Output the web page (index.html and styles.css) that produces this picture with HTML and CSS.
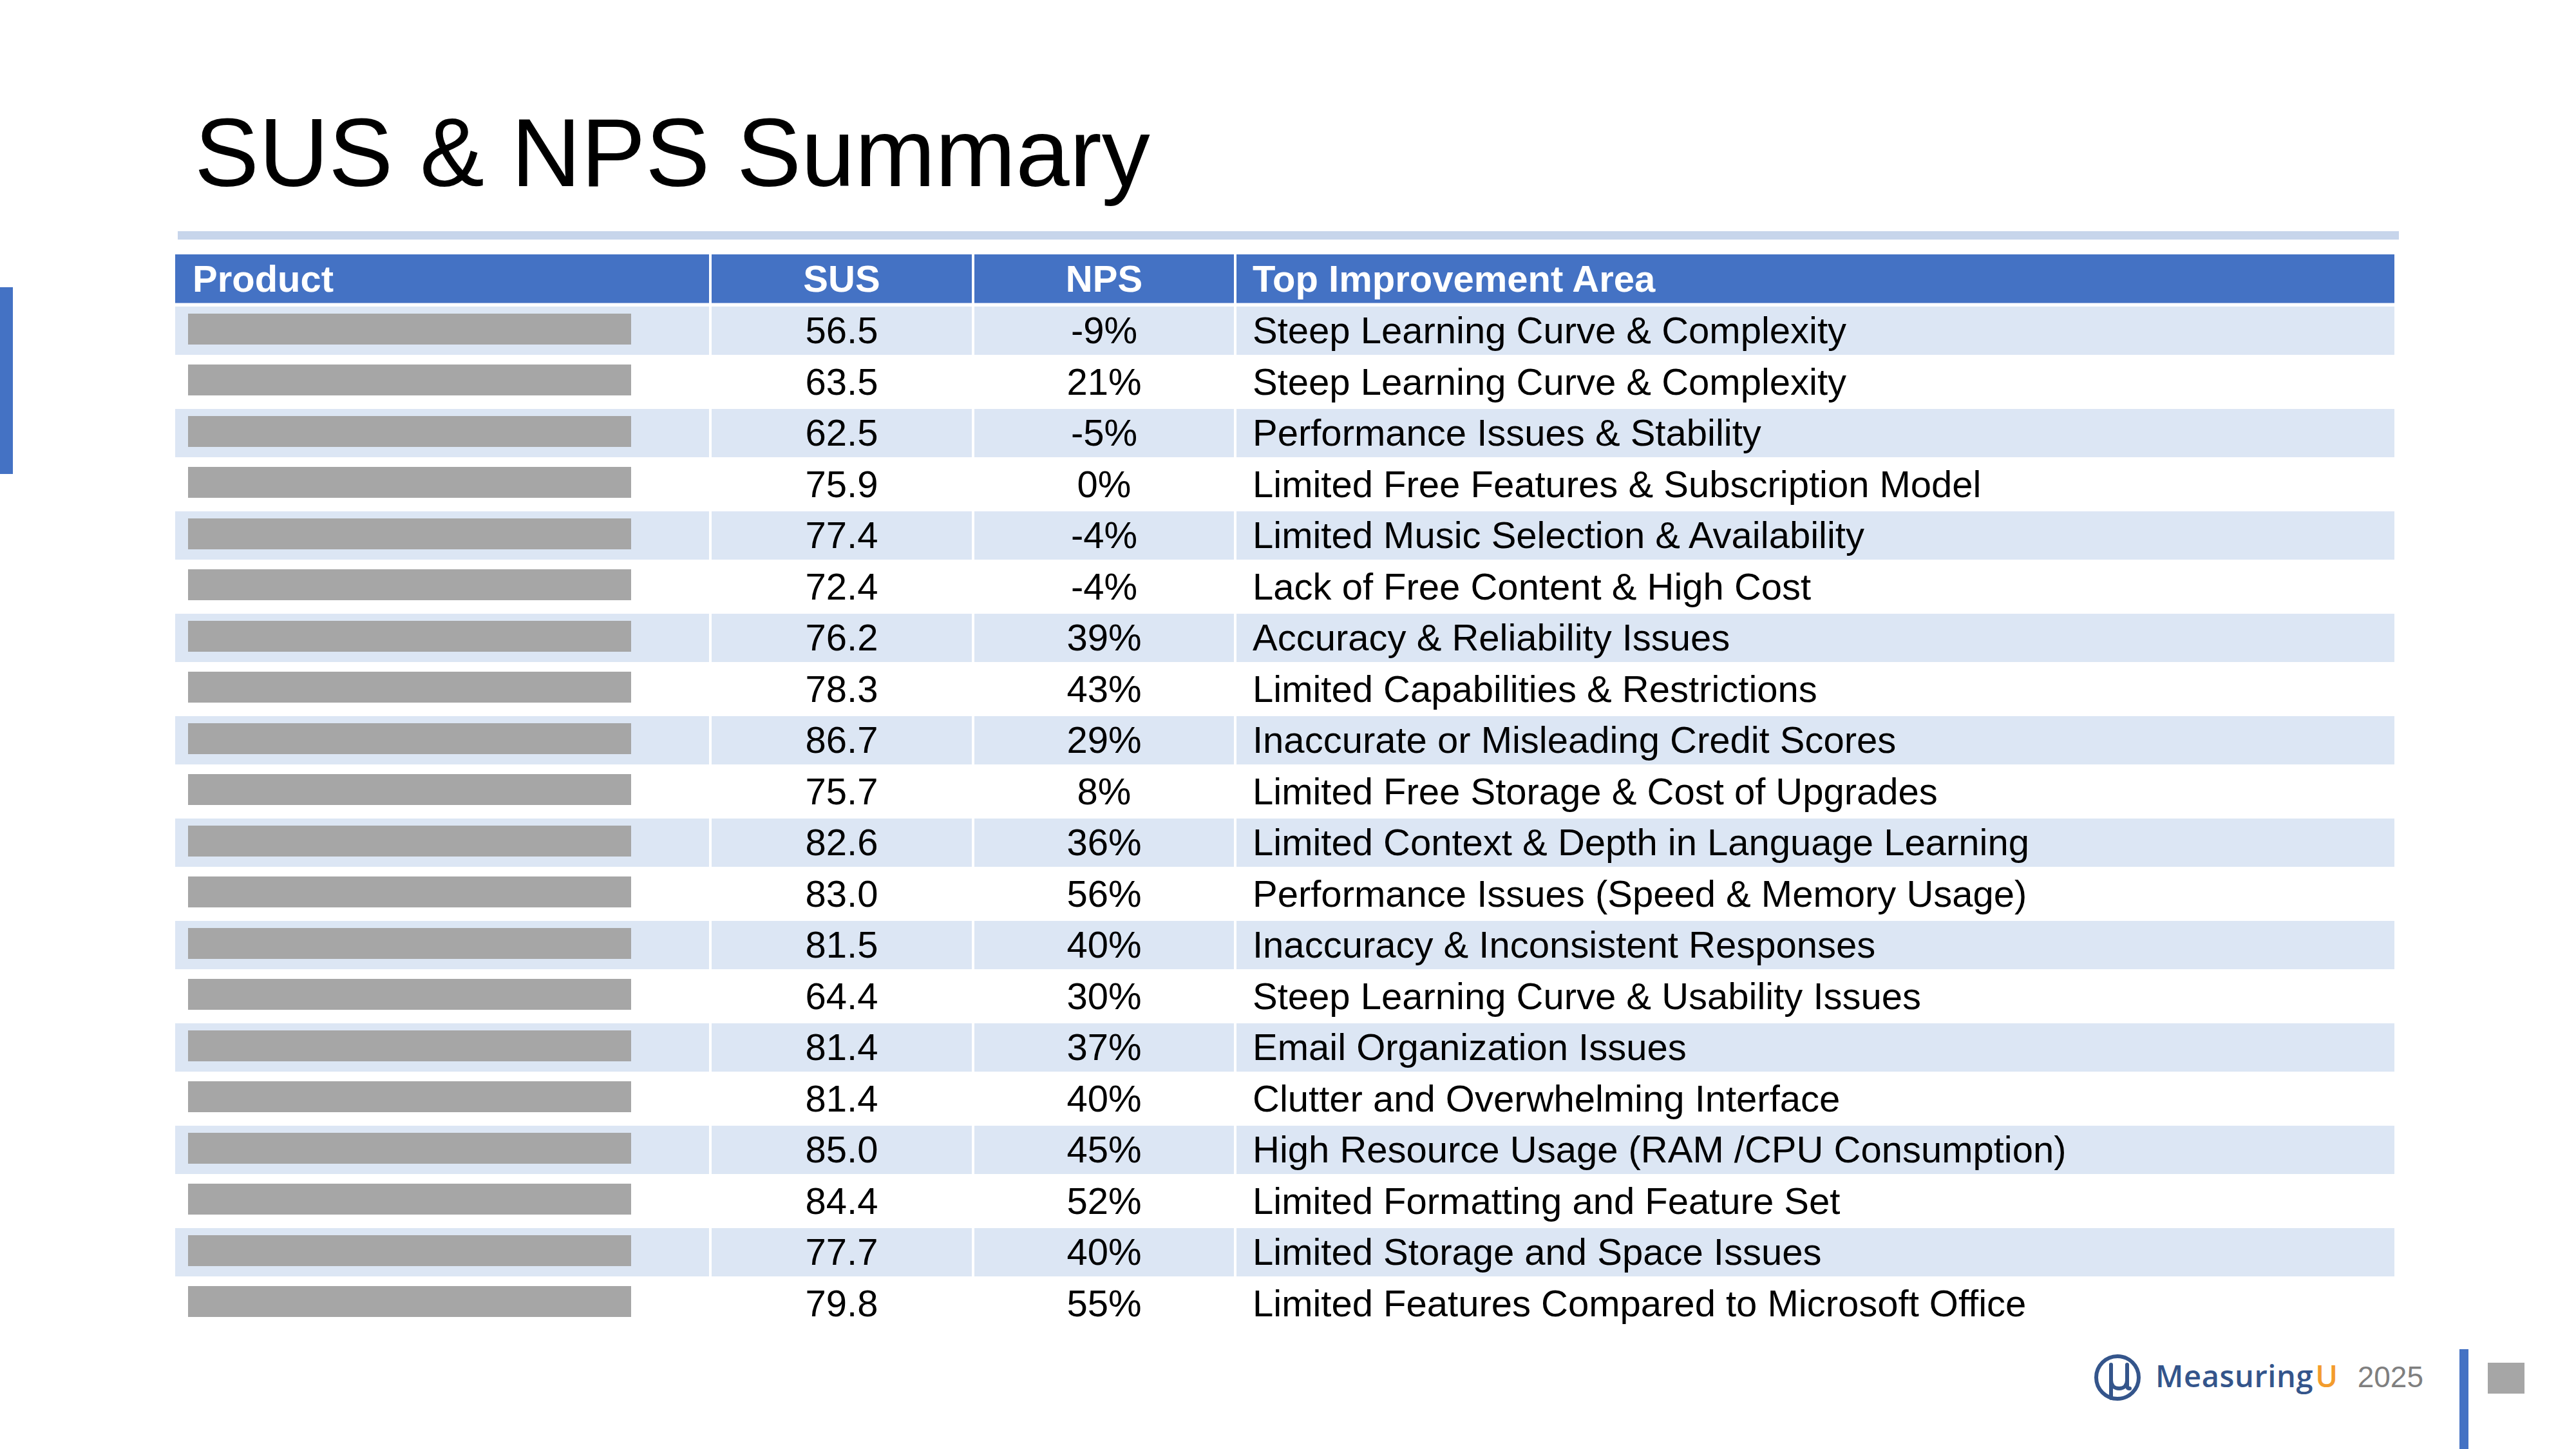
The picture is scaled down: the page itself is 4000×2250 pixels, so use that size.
FILE: index.html
```html
<!DOCTYPE html>
<html lang="en">
<head>
<meta charset="utf-8">
<title>SUS &amp; NPS Summary</title>
<link rel="stylesheet" href="styles.css">
</head>
<body>
<div class="slide">
  <h1 class="title">SUS &amp; NPS Summary</h1>
  <div class="rule"></div>
  <div class="content">
    <div class="accent"></div>
    <div class="table">
      <div class="row head">
        <div class="cell prod">Product</div>
        <div class="cell num">SUS</div>
        <div class="cell num">NPS</div>
        <div class="cell area">Top Improvement Area</div>
      </div>
      <div class="row shade"><div class="cell prod"><span class="redact"></span></div><div class="cell num">56.5</div><div class="cell num">-9%</div><div class="cell area">Steep Learning Curve &amp; Complexity</div></div>
      <div class="row"><div class="cell prod"><span class="redact"></span></div><div class="cell num">63.5</div><div class="cell num">21%</div><div class="cell area">Steep Learning Curve &amp; Complexity</div></div>
      <div class="row shade"><div class="cell prod"><span class="redact"></span></div><div class="cell num">62.5</div><div class="cell num">-5%</div><div class="cell area">Performance Issues &amp; Stability</div></div>
      <div class="row"><div class="cell prod"><span class="redact"></span></div><div class="cell num">75.9</div><div class="cell num">0%</div><div class="cell area">Limited Free Features &amp; Subscription Model</div></div>
      <div class="row shade"><div class="cell prod"><span class="redact"></span></div><div class="cell num">77.4</div><div class="cell num">-4%</div><div class="cell area">Limited Music Selection &amp; Availability</div></div>
      <div class="row"><div class="cell prod"><span class="redact"></span></div><div class="cell num">72.4</div><div class="cell num">-4%</div><div class="cell area">Lack of Free Content &amp; High Cost</div></div>
      <div class="row shade"><div class="cell prod"><span class="redact"></span></div><div class="cell num">76.2</div><div class="cell num">39%</div><div class="cell area">Accuracy &amp; Reliability Issues</div></div>
      <div class="row"><div class="cell prod"><span class="redact"></span></div><div class="cell num">78.3</div><div class="cell num">43%</div><div class="cell area">Limited Capabilities &amp; Restrictions</div></div>
      <div class="row shade"><div class="cell prod"><span class="redact"></span></div><div class="cell num">86.7</div><div class="cell num">29%</div><div class="cell area">Inaccurate or Misleading Credit Scores</div></div>
      <div class="row"><div class="cell prod"><span class="redact"></span></div><div class="cell num">75.7</div><div class="cell num">8%</div><div class="cell area">Limited Free Storage &amp; Cost of Upgrades</div></div>
      <div class="row shade"><div class="cell prod"><span class="redact"></span></div><div class="cell num">82.6</div><div class="cell num">36%</div><div class="cell area">Limited Context &amp; Depth in Language Learning</div></div>
      <div class="row"><div class="cell prod"><span class="redact"></span></div><div class="cell num">83.0</div><div class="cell num">56%</div><div class="cell area">Performance Issues (Speed &amp; Memory Usage)</div></div>
      <div class="row shade"><div class="cell prod"><span class="redact"></span></div><div class="cell num">81.5</div><div class="cell num">40%</div><div class="cell area">Inaccuracy &amp; Inconsistent Responses</div></div>
      <div class="row"><div class="cell prod"><span class="redact"></span></div><div class="cell num">64.4</div><div class="cell num">30%</div><div class="cell area">Steep Learning Curve &amp; Usability Issues</div></div>
      <div class="row shade"><div class="cell prod"><span class="redact"></span></div><div class="cell num">81.4</div><div class="cell num">37%</div><div class="cell area">Email Organization Issues</div></div>
      <div class="row"><div class="cell prod"><span class="redact"></span></div><div class="cell num">81.4</div><div class="cell num">40%</div><div class="cell area">Clutter and Overwhelming Interface</div></div>
      <div class="row shade"><div class="cell prod"><span class="redact"></span></div><div class="cell num">85.0</div><div class="cell num">45%</div><div class="cell area">High Resource Usage (RAM /CPU Consumption)</div></div>
      <div class="row"><div class="cell prod"><span class="redact"></span></div><div class="cell num">84.4</div><div class="cell num">52%</div><div class="cell area">Limited Formatting and Feature Set</div></div>
      <div class="row shade"><div class="cell prod"><span class="redact"></span></div><div class="cell num">77.7</div><div class="cell num">40%</div><div class="cell area">Limited Storage and Space Issues</div></div>
      <div class="row"><div class="cell prod"><span class="redact"></span></div><div class="cell num">79.8</div><div class="cell num">55%</div><div class="cell area">Limited Features Compared to Microsoft Office</div></div>
    </div>
  </div>
  <div class="footer">
    <svg class="logo-mark" viewBox="0 0 80 80" width="80" height="80" aria-hidden="true">
      <circle cx="40" cy="40" r="33" fill="none" stroke="#34558b" stroke-width="6"/>
      <path d="M30 20 V72 M30 44 C30 52 35 57 42.5 57 C50 57 55 52 55 44 M55 20 V53 Q55 57 59 57" fill="none" stroke="#34558b" stroke-width="6" stroke-linecap="round"/>
    </svg>
    <div class="brand">Measuring<span class="brand-u">U</span></div>
    <div class="year">2025</div>
    <div class="vbar"></div>
    <div class="square"></div>
  </div>
</div>
</body>
</html>
```

FILE: styles.css
```css
html, body {
  margin: 0;
  padding: 0;
  background: #ffffff;
}

.slide {
  width: 4000px;
  height: 2250px;
  overflow: hidden;
  display: flex;
  flex-direction: column;
  font-family: "Liberation Sans", Arial, sans-serif;
  color: #000000;
}

.title {
  margin: 0;
  padding: 162px 0 0 302px;
  font-size: 150px;
  line-height: 151px;
  font-weight: 400;
  color: #000000;
}

.rule {
  margin: 46px 0 0 276px;
  width: 3449px;
  height: 13px;
  background: #c7d5eb;
}

.content {
  margin-top: 23px;
  display: flex;
  align-items: flex-start;
}

.accent {
  width: 20px;
  height: 290px;
  margin-top: 51px;
  background: #4472c4;
  flex: none;
}

.table {
  margin-left: 252px;
  width: 3446px;
  display: flex;
  flex-direction: column;
  gap: 4.5px;
}

.row {
  display: grid;
  grid-template-columns: 829px 404px 403px 1fr;
  column-gap: 4px;
  height: 75px;
}

.cell {
  display: flex;
  align-items: center;
  font-size: 58px;
  line-height: 1;
  white-space: nowrap;
}

.num {
  justify-content: center;
}

.prod {
  padding-left: 27px;
}

.area {
  padding-left: 25px;
}

.head {
  height: 76px;
}

.head .cell {
  background: #4472c4;
  color: #ffffff;
  font-weight: 700;
  box-sizing: border-box;
  border-bottom: 1px solid #9db4e0;
}

.shade .cell {
  background: #dce6f4;
}

.redact {
  display: block;
  align-self: flex-start;
  margin: 11px 0 0 -7px;
  width: 688px;
  height: 48px;
  background: #a6a6a6;
}

.footer {
  margin-top: auto;
  height: 155px;
  display: flex;
  justify-content: flex-end;
  align-items: flex-start;
  padding-right: 80px;
}

.logo-mark {
  margin-top: 4px;
  flex: none;
}

.brand {
  margin: 18px 0 0 19px;
  white-space: nowrap;
  font-family: "Open Sans", "Noto Sans", sans-serif;
  font-weight: 600;
  font-size: 47px;
  line-height: 46px;
  letter-spacing: 0.6px;
  color: #34558b;
}

.brand-u {
  margin-left: 3px;
  color: #f39c2c;
}

.year {
  margin: 20px 0 0 30px;
  font-size: 46px;
  line-height: 46px;
  color: #7f7f7f;
}

.vbar {
  margin-left: 56px;
  width: 14px;
  align-self: stretch;
  background: #4472c4;
}

.square {
  margin: 21px 0 0 30px;
  width: 57px;
  height: 48px;
  background: #a6a6a6;
}
```
